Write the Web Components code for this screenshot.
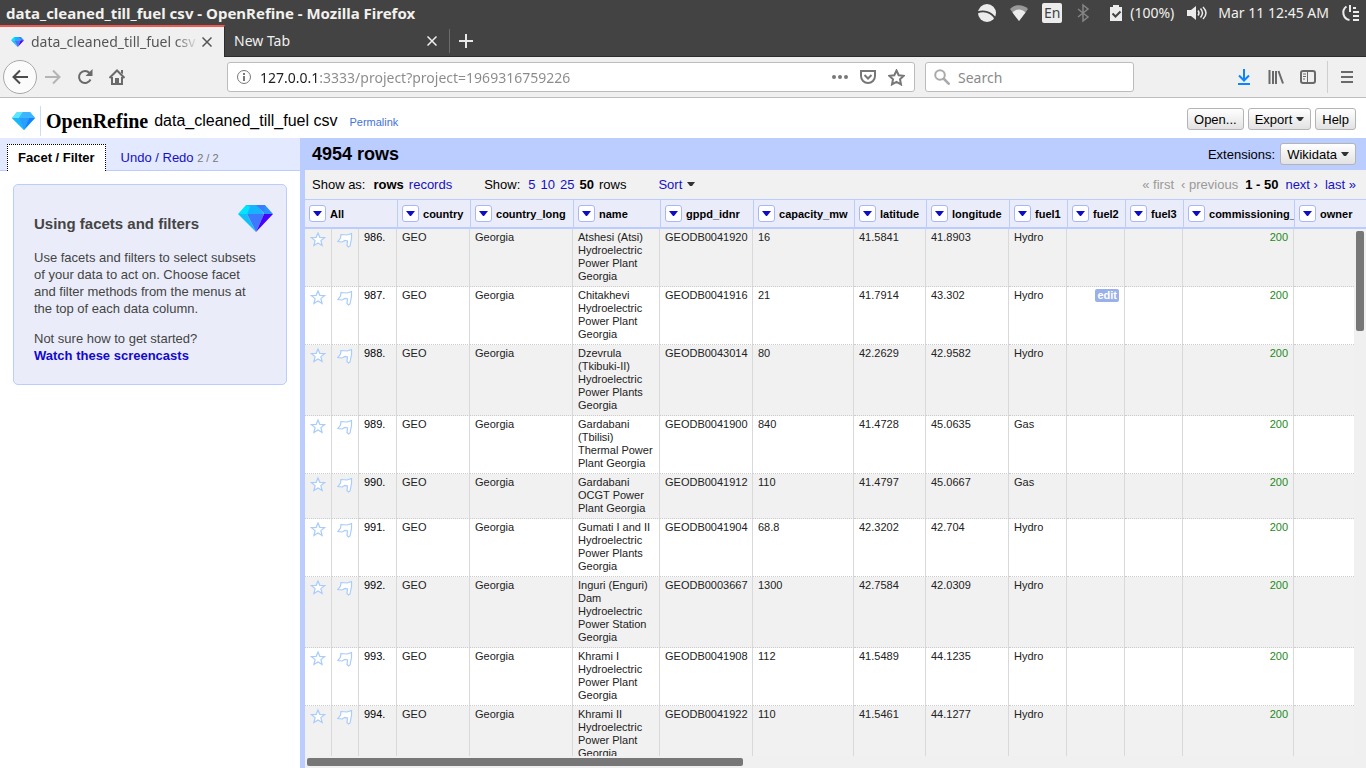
<!DOCTYPE html>
<html lang="en">
<head>
<meta charset="utf-8">
<title>data_cleaned_till_fuel csv - OpenRefine</title>
<style>
  :root {
    --ui: "Noto Sans", "Open Sans", sans-serif;
    --app: "Liberation Sans", Arial, sans-serif;
    --chrome-dark: #434343;
    --chrome-light: #f0f0f0;
    --blue: #bbccff;
    --pale: #eaedf9;
    --link: #1410c9;
  }
  html, body { margin: 0; height: 100%; }
  body { font: 13px/17px var(--app); color: #000; background: #fff; overflow: hidden; }
</style>
</head>
<body>
<open-refine-window></open-refine-window>

<script>
const define = (name, css, html, setup) => {
  customElements.define(name, class extends HTMLElement {
    connectedCallback() {
      if (this.shadowRoot) return;
      const root = this.attachShadow({ mode: "open" });
      const template = document.createElement("template");
      template.innerHTML = `<style>*{box-sizing:border-box}a{color:var(--link);text-decoration:none}${css}</style>` +
        (typeof html === "function" ? html(this) : html);
      root.append(template.content.cloneNode(true));
      if (setup) setup(this, root);
    }
  });
};

/* ---------- shared pieces ---------- */

define("refine-diamond", `
  :host{display:block} svg{display:block;width:100%;height:auto}`,
  `<svg viewBox="0 0 35 27" aria-hidden="true">
    <path fill="#00e5ff" d="M8 0h9L9 9H0z"/><path fill="#1fb6ff" d="M8 0h19l-9 0L9 9l9-9 9 9z"/>
    <path fill="#14b4ff" d="M13 0h6l7 9H9z"/><path fill="#3a7dff" d="M18 0h9v9z"/><path fill="#2a92ff" d="M27 0l8 9h-9L27 0z"/>
    <path fill="#12c0f8" d="M0 9h9l9 18z"/><path fill="#3e78ff" d="M9 9h17l-8 18z"/><path fill="#4a00ff" d="M26 9h9L18 27z"/>
  </svg>`);

define("refine-mark", `
  :host{display:block} svg{display:block;width:100%;height:auto}`,
  `<svg viewBox="0 0 23 18" aria-hidden="true">
    <path fill="#29d3ff" d="M5 0h13l5 6-11 12L0 6z"/><path fill="#5fe6ff" d="M5 0h6L7 6H0z"/>
    <path fill="#3db5ff" d="M11 0h7l5 6H7z"/><path fill="#16b8fb" d="M0 6h7l5 12z"/>
    <path fill="#2a9dff" d="M7 6h10l-5 12z"/><path fill="#1682ff" d="M17 6h6L12 18z"/>
  </svg>`);

define("refine-button", `
  :host{display:block}
  button{display:flex;align-items:center;gap:4px;height:22px;padding:0 6px;border:1px solid #b4b4b4;border-radius:3px;
    background:linear-gradient(#fff,#e2e2e2);font:13px/17px var(--app);color:#000;white-space:nowrap}
  svg{display:block;width:8px;height:5px}`,
  el => `<button type="button"><slot></slot>${el.hasAttribute("menu") ? '<svg viewBox="0 0 8 5"><path fill="#333" d="M0 0h8L5 4H3z"/></svg>' : ""}</button>`);

/* ---------- desktop panel ---------- */

define("desktop-panel", `
  :host{display:flex;align-items:center;justify-content:space-between;height:25px;padding:0 6px;
    background:var(--chrome-dark);color:#f2f1ee;font:14px/20px var(--ui);white-space:nowrap}
  strong{font-size:15px}
  .tray{display:flex;align-items:center}
  svg{display:block;fill:#ececec}
  .lang{width:20px;height:20px;margin:0 13px;border-radius:2px;background:#ececec;color:#434343;text-align:center}
  .charge{margin:0 12px 0 7px}
  .clock{margin:0 12px 0 10px}`,
  `<strong>data_cleaned_till_fuel csv - OpenRefine - Mozilla Firefox</strong>
  <div class="tray">
    <svg width="20" height="20" viewBox="0 0 20 20"><circle cx="10" cy="10" r="9"/><path fill="none" stroke="#434343" stroke-width="2" d="M0 9.500C7 7 14 9 18.500 15.500"/></svg>
    <svg width="20" height="20" viewBox="0 0 20 20" style="margin-left:12px"><path fill="#999" d="M1 6c5-5 13-5 18 0l-9 12z"/><path d="M3.500 9.500c4-4 9-4 13 0L10 18z"/></svg>
    <span class="lang">En</span>
    <svg width="16" height="20" viewBox="0 0 16 20"><path fill="none" stroke="#858585" stroke-width="1.500" d="M3 6l10 8-5 4V2l5 4-10 8"/></svg>
    <svg width="14" height="18" viewBox="0 0 14 18" style="margin-left:18px"><path d="M1 3h3V1h6v2h3v14H1z"/><path fill="none" stroke="#434343" stroke-width="2" d="M3.500 9.500l3 3 5-5"/></svg>
    <span class="charge">(100%)</span>
    <svg width="22" height="16" viewBox="0 0 22 16"><path d="M1 5h4l5-4v14l-5-4H1z"/><path fill="none" stroke="#ececec" stroke-width="1.500" d="M12 5.500q2 2.500 0 5M14.500 3.500q4 4.500 0 9M17 2q6 6 0 12"/></svg>
    <span class="clock">Mar 11 12:45 AM</span>
    <svg width="19" height="18" viewBox="0 0 19 18"><path fill="none" stroke="#ececec" stroke-width="2" d="M5.500 2.500a7.500 7.500 0 0 0 3 13.500M9 1v7M12 4h3M12 8h6M12 12h6M12 16h6"/></svg>
  </div>`);

/* ---------- browser chrome ---------- */

define("browser-tab", `
  :host{display:flex;align-items:center;width:224px;height:32px;padding:0 12px 0 9px;color:#f0f0f0;
    font:14px/20px var(--ui);white-space:nowrap}
  :host([selected]){width:225px;background:var(--chrome-light);color:#555;border-top:2px solid #f15a50;border-right:1px solid #2c2c2c;padding-left:11px}
  refine-diamond{width:13px;margin-right:7px;flex:none}
  .label{flex:1;overflow:hidden}
  :host([selected]) .label{-webkit-mask:linear-gradient(90deg,#000 144px,transparent 168px)}
  button{border:0;background:none;padding:0;color:inherit}
  svg{display:block}`,
  el => `${el.hasAttribute("selected") ? "<refine-diamond></refine-diamond>" : ""}
  <span class="label"><slot></slot></span>
  <button type="button" aria-label="Close tab"><svg width="10" height="10" viewBox="0 0 10 10"><path fill="none" stroke="currentColor" stroke-width="1.500" d="M.5.5l9 9M9.500.5l-9 9"/></svg></button>`);

define("browser-tabs", `
  :host{display:flex;align-items:stretch;height:32px;background:var(--chrome-dark);box-shadow:inset 0 -1px #2c2c2c}
  .new{display:grid;place-items:center;width:33px;height:24px;margin-top:4px;padding:0;border:0;border-left:1px solid #6b6b6b;background:none}`,
  `<browser-tab selected>data_cleaned_till_fuel csv</browser-tab>
  <browser-tab>New Tab</browser-tab>
  <button class="new" type="button" aria-label="New tab"><svg width="14" height="14" viewBox="0 0 14 14"><path fill="none" stroke="#e8e8e8" stroke-width="2" d="M7 0v14M0 7h14"/></svg></button>`);

define("browser-toolbar", `
  :host{display:flex;align-items:center;height:41px;padding:0 0 0 3px;background:var(--chrome-light);border-bottom:1px solid #bebebe;
    font:14px/20px var(--ui)}
  button{flex:none;display:grid;place-items:center;width:32px;height:32px;padding:0;border:0;background:none}
  .back{width:34px;height:34px;border:1px solid #a8a8a8;border-radius:50%;background:#fbfbfb}
  .spacer{flex:0 1 94px}
  .field{display:flex;align-items:center;gap:8px;height:30px;padding:0 8px;border:1px solid #bcbcbc;border-radius:3px;background:#fff}
  .url{flex:1;margin-right:10px}
  .search{width:209px}
  input{flex:1;min-width:0;height:26px;padding:0;border:0;outline:0;background:none;font:14px/20px var(--ui);color:#8a8a8a}
  input::placeholder{color:#8a8a8a;opacity:1}
  #address{background:linear-gradient(90deg,#1d1d1d 60px,#8a8a8a 60px);-webkit-background-clip:text;background-clip:text;color:transparent}
  .field button{width:20px;height:20px}
  .menu{width:39px;border-left:1px solid #cfcfcf;margin-left:3px}
  svg{display:block;fill:none;stroke:#6a6a6a;stroke-width:2}`,
  `<button class="back" type="button" aria-label="Back"><svg width="16" height="16" viewBox="0 0 16 16"><path stroke="#4c4c4c" d="M16 8H2M8 1.500L1.500 8 8 14.500"/></svg></button>
  <button type="button" aria-label="Forward"><svg width="16" height="16" viewBox="0 0 16 16"><path stroke="#b4b4b4" d="M0 8h14M8 1.500L14.500 8 8 14.500"/></svg></button>
  <button type="button" aria-label="Reload"><svg width="16" height="16" viewBox="0 0 16 16"><path d="M13.500 10.500a6 6 0 1 1-1-6.500"/><path fill="#6a6a6a" stroke="none" d="M15.500 0v7h-7z"/></svg></button>
  <button type="button" aria-label="Home"><svg width="16" height="16" viewBox="0 0 16 16"><path d="M.5 9L8 1.500 15.500 9M3 8v7h10V8"/><path fill="#6a6a6a" stroke="none" d="M6 9h4v6H6zM12 1h2v4l-2-1z"/></svg></button>
  <span class="spacer"></span>
  <div class="field url">
    <svg width="16" height="16" viewBox="0 0 16 16"><circle cx="8" cy="8" r="6.500" stroke="#777" stroke-width="1"/><path stroke="#777" d="M8 7v5M8 4v2"/></svg>
    <input id="address" aria-label="Address" value="127.0.0.1:3333/project?project=1969316759226">
    <button type="button" aria-label="Page actions"><svg width="18" height="6" viewBox="0 0 18 6"><path fill="#777" stroke="none" d="M1 3a2 2 0 1 1 4 0a2 2 0 1 1-4 0M7 3a2 2 0 1 1 4 0a2 2 0 1 1-4 0M13 3a2 2 0 1 1 4 0a2 2 0 1 1-4 0"/></svg></button>
    <button type="button" aria-label="Save to Pocket"><svg width="16" height="16" viewBox="0 0 16 16"><path stroke="#777" d="M1 2h14v5a7 7 0 0 1-14 0zM4.500 6L8 9.500 11.500 6"/></svg></button>
    <button type="button" aria-label="Bookmark"><svg width="17" height="17" viewBox="0 0 17 17"><path stroke="#777" d="M8.500 1.500l2.200 4.700 5 .6-3.700 3.500 1 5.100-4.500-2.500L4 15.400l1-5.100L1.300 6.800l5-.6z"/></svg></button>
  </div>
  <div class="field search">
    <svg width="16" height="16" viewBox="0 0 16 16"><circle cx="6" cy="6" r="4.800" stroke="#aaa"/><path stroke="#aaa" stroke-width="2.500" d="M9.500 9.500l6 6"/></svg>
    <input type="text" aria-label="Search" placeholder="Search">
  </div>
  <span class="spacer"></span>
  <button type="button" aria-label="Downloads"><svg width="14" height="16" viewBox="0 0 14 16"><path stroke="#0a84ff" d="M7 0v11M2 6.500l5 5 5-5M1 15h12"/></svg></button>
  <button type="button" aria-label="Library"><svg width="16" height="14" viewBox="0 0 16 14"><path d="M1.500 0v14M5 1v13M8 1v13M10.500 1l4.500 12.500"/></svg></button>
  <button type="button" aria-label="Sidebars"><svg width="16" height="14" viewBox="0 0 16 14"><rect x="1" y="1" width="14" height="12" rx="2"/><path stroke-width="1" d="M7.500 1v12M3 4h3M3 6.500h3M3 9h2"/></svg></button>
  <button class="menu" type="button" aria-label="Open menu"><svg width="12" height="12" viewBox="0 0 12 12"><path d="M0 1h12M0 6h12M0 11h12"/></svg></button>`);

/* ---------- OpenRefine ---------- */

define("refine-header", `
  :host{display:flex;align-items:center;height:40px;padding:6px 10px 0 12px;background:#fff;white-space:nowrap}
  refine-mark{width:23px}
  .logo{display:flex;align-items:center;height:30px;margin:0 6px 0 5px;padding-left:5px;border-left:1px solid #ccdcff;
    font:bold 20px/24px "Liberation Serif",serif;color:#000}
  h1{margin:0;font-size:16px;font-weight:normal;line-height:20px}
  .permalink{margin:2px auto 0 12px;font-size:11px;color:#4272db}
  nav{display:flex;gap:4px;margin-bottom:4px}`,
  `<refine-mark></refine-mark><a class="logo" href="#">OpenRefine</a>
  <h1>data_cleaned_till_fuel csv</h1><a class="permalink" href="#">Permalink</a>
  <nav><refine-button>Open...</refine-button><refine-button menu>Export</refine-button><refine-button>Help</refine-button></nav>`);

define("refine-sidebar", `
  :host{display:block;background:#fff}
  nav{display:flex;align-items:flex-end;gap:4px;height:33px;padding-left:7px;background:#e3e9ff;box-shadow:inset 0 -1px var(--blue)}
  nav a{height:27px;padding:4px 10px;border:1px solid transparent;border-bottom:0}
  nav a.current{background:#fff;color:#000;font-weight:bold;border:1px dotted #000;border-bottom:0}
  small{font-size:11px;color:#777}
  section{margin:13px;padding:20px;height:201px;border:1px solid var(--blue);border-radius:5px;background:var(--pale);color:#444}
  header{display:flex;justify-content:space-between;height:44px}
  h2{margin:9px 0 0;font-size:15px;line-height:20px}
  refine-diamond{width:35px;margin-right:-7px}
  p{margin:0 8px 13px 0}
  p a{font-weight:bold;color:#1208d0}`,
  `<nav><a class="current" href="#">Facet / Filter</a><a href="#">Undo / Redo <small>2 / 2</small></a></nav>
  <section><header><h2>Using facets and filters</h2><refine-diamond></refine-diamond></header>
  <p>Use facets and filters to select subsets of your data to act on. Choose facet and filter methods from the menus at the top of each data column.</p>
  <p>Not sure how to get started?<br><a href="#">Watch these screencasts</a></p></section>`);

const columns = [
  ["country", 73], ["country_long", 103], ["name", 87], ["gppd_idnr", 93], ["capacity_mw", 101], ["latitude", 72],
  ["longitude", 83], ["fuel1", 58], ["fuel2", 58], ["fuel3", 58], ["commissioning_year", 111], ["owner", 150]
];
const rows = [
  ["986.", "Atshesi (Atsi) Hydroelectric Power Plant Georgia", "GEODB0041920", "16", "41.5841", "41.8903", "Hydro"],
  ["987.", "Chitakhevi Hydroelectric Power Plant Georgia", "GEODB0041916", "21", "41.7914", "43.302", "Hydro"],
  ["988.", "Dzevrula (Tkibuki-II) Hydroelectric Power Plants Georgia", "GEODB0043014", "80", "42.2629", "42.9582", "Hydro"],
  ["989.", "Gardabani (Tbilisi) Thermal Power Plant Georgia", "GEODB0041900", "840", "41.4728", "45.0635", "Gas"],
  ["990.", "Gardabani OCGT Power Plant Georgia", "GEODB0041912", "110", "41.4797", "45.0667", "Gas"],
  ["991.", "Gumati I and II Hydroelectric Power Plants Georgia", "GEODB0041904", "68.8", "42.3202", "42.704", "Hydro"],
  ["992.", "Inguri (Enguri) Dam Hydroelectric Power Station Georgia", "GEODB0003667", "1300", "42.7584", "42.0309", "Hydro"],
  ["993.", "Khrami I Hydroelectric Power Plant Georgia", "GEODB0041908", "112", "41.5489", "44.1235", "Hydro"],
  ["994.", "Khrami II Hydroelectric Power Plant Georgia", "GEODB0041922", "110", "41.5461", "44.1277", "Hydro"]
];
const star = `<svg width="16" height="16" viewBox="0 0 16 16"><path fill="#fff" stroke="#a9ccfb" stroke-width="1.200" d="M8 2l1.800 4.300 4.700.3-3.600 3 1.200 4.900L8 12l-4.100 2.500 1.200-4.900-3.600-3 4.700-.3z"/></svg>`;
const flag = `<svg width="16" height="17" viewBox="0 0 16 17"><path fill="#fff" stroke="#a9ccfb" stroke-width="1.200" d="M4 3.500l6 .5 4.500-1.500v5l-1.500 7.500-1.500 1-1.500-1.500.5-4.500-2.500-.5-3 1.500-4-.5 2.500-3.500z"/></svg>`;
const colgroup = `<colgroup><col style="width:27px"><col style="width:27px"><col style="width:38px">${columns.map(c => `<col style="width:${c[1]}px">`).join("")}</colgroup>`;
const menuButton = name => `<button type="button" aria-label="${name} menu"><svg width="9" height="6" viewBox="0 0 9 6"><path fill="#0d0dc8" d="M0 0h9L5 5H4z"/></svg></button>`;

define("refine-grid", `
  :host{display:grid;grid-template:30px minmax(0,1fr) 12px/minmax(0,1fr) 12px;overflow:hidden;background:#fff;font-size:11px;line-height:13px}
  .head{grid-column:1/3;overflow:hidden;background:var(--pale);border-top:1px solid var(--blue);border-bottom:2px solid var(--blue)}
  .body{overflow:hidden}
  table{width:1139px;table-layout:fixed;border-collapse:separate;border-spacing:0}
  th{height:27px;padding:0 0 0 4px;border-left:1px solid var(--blue);text-align:left;overflow:hidden}
  th:first-child{border-left:0}
  th div{display:flex;align-items:center;gap:4px;white-space:nowrap}
  th span{padding-top:2px}
  th button{flex:none;display:grid;place-items:center;width:17px;height:17px;padding:0;border:1px solid #a5b8fa;border-radius:3px;background:#fff}
  td{padding:2px 5px 3px;border-right:1px solid #d9d9d9;border-bottom:1px dotted #ccc;vertical-align:top;color:#222}
  td.mark{padding:2px 0 0 5px}
  td.number{text-align:right;color:#1c8a1c}
  td.index{color:#000}
  tr:nth-child(odd) td{background:#f1f1f1}
  td a,svg{display:block}
  .edit{display:block;margin-left:auto;height:13px;padding:0 2px;border:0;border-radius:2px;background:#9ab0e8;color:#fff;font:bold 11px/13px var(--app)}
  .track{background:#f0f0f0}
  .track.y{padding:2px}
  .track.x{grid-column:1/3;padding:2px}
  .thumb{border-radius:2px;background:#777}
  .y .thumb{width:8px;height:100px}
  .x .thumb{width:436px;height:8px}`,
  () => `<div class="head"><table>${colgroup}<thead><tr><th colspan="3"><div>${menuButton("All")}<span>All</span></div></th>${
    columns.map(([n]) => `<th><div>${menuButton(n)}<span>${n}</span></div></th>`).join("")}</tr></thead></table></div>
  <div class="body"><table>${colgroup}<tbody>${rows.map(([i, name, id, mw, lat, lon, fuel]) => `<tr>
    <td class="mark"><a href="#" aria-label="Star">${star}</a></td><td class="mark"><a href="#" aria-label="Flag">${flag}</a></td>
    <td class="index">${i}</td><td>GEO</td><td>Georgia</td><td>${name}</td><td>${id}</td><td>${mw}</td><td>${lat}</td><td>${lon}</td><td>${fuel}</td>
    <td>${i === "987." ? '<button class="edit" type="button">edit</button>' : ""}</td><td></td><td class="number">200</td><td></td></tr>`).join("")}</tbody></table></div>
  <div class="track y"><div class="thumb"></div></div>
  <div class="track x"><div class="thumb"></div></div>`);

define("refine-view", `
  :host{display:grid;grid-template-rows:32px 29px minmax(0,1fr);min-width:0;border-left:5px solid var(--blue);white-space:nowrap}
  .summary{display:flex;align-items:center;justify-content:space-between;padding:0 10px 0 7px;background:var(--blue)}
  h2{margin:0;font-size:18px;line-height:22px}
  .ext{display:flex;align-items:center;gap:5px}
  .bar{display:flex;align-items:center;justify-content:space-between;padding:0 10px 0 7px;background:#f1f1f1}
  .group{display:flex;align-items:center;gap:32px}
  .set{display:flex;gap:5px}
  .label{margin-right:3px}
  .pager{display:flex;gap:7px}
  .off{color:#999}
  .sort{display:flex;align-items:center;gap:5px}
  svg{display:block}
  refine-grid{white-space:normal}`,
  `<div class="summary"><h2>4954 rows</h2><div class="ext"><span>Extensions:</span><refine-button menu>Wikidata</refine-button></div></div>
  <div class="bar">
    <div class="group">
      <div class="set"><span class="label">Show as:</span><b>rows</b><a href="#">records</a></div>
      <div class="set"><span class="label">Show:</span><a href="#">5</a><a href="#">10</a><a href="#">25</a><b>50</b><span>rows</span></div>
      <a class="sort" href="#">Sort <svg width="8" height="5" viewBox="0 0 8 5"><path fill="#333" d="M0 0h8L5 4H3z"/></svg></a>
    </div>
    <div class="pager"><span class="off">« first</span><span class="off">‹ previous</span><b>1 - 50</b><a href="#">next ›</a><a href="#">last »</a></div>
  </div>
  <refine-grid></refine-grid>`);

define("open-refine-window", `
  :host{display:flex;flex-direction:column;height:100vh}
  desktop-panel,browser-tabs,browser-toolbar,refine-header{flex:none}
  main{flex:1;min-height:0;display:grid;grid-template-columns:300px minmax(0,1fr);grid-template-rows:minmax(0,1fr)}`,
  `<desktop-panel></desktop-panel><browser-tabs></browser-tabs><browser-toolbar></browser-toolbar>
  <refine-header></refine-header>
  <main><refine-sidebar></refine-sidebar><refine-view></refine-view></main>`);
</script>
</body>
</html>
